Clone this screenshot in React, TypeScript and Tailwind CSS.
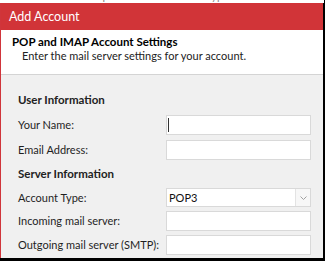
import React from "react";

const font = { fontFamily: 'Lato, "Noto Sans", Arial, sans-serif' };

function Field({ label, caret }: { label: string; caret?: boolean }) {
	return (
		<div className="flex items-center">
			<span className="w-[148px] whitespace-nowrap text-[11px] leading-[16px] text-[#1f1f1f]">{label}</span>
			<div className="relative h-[20px] w-[145px] border border-[#d9d9d9] bg-white">
				{caret && <div className="absolute left-[1px] top-[2px] h-[14px] w-px bg-[#333]" />}
			</div>
		</div>
	);
}

export default function App() {
	return (
		<div className="h-[261px] w-[325px] overflow-hidden bg-white" style={font}>
			<div className="h-[3px] overflow-hidden border-r border-black">
				<p className="-mt-[10px] whitespace-nowrap pl-[4px] text-[11px] leading-[12px] text-[#888]">
					Choose Manual setup or additional server types in the account window
				</p>
			</div>

			<div className="flex h-[255px] flex-col border-l border-l-[#d0353b] border-r-2 border-r-black">
				<div className="flex h-[27px] items-center bg-[#d13438] pl-[8px] text-[12.5px] leading-[18px] text-white">
					Add Account
				</div>

				<div className="h-[45px] border-b border-[#d4d4d4] bg-white pl-[11px] pt-[5px]">
					<p className="whitespace-nowrap text-[11.5px] font-bold leading-[14px] text-black">
						POP and IMAP Account Settings
					</p>
					<p className="whitespace-nowrap pl-[10px] text-[11px] leading-[14px] text-[#222]">
						Enter the mail server settings for your account.
					</p>
				</div>

				<div className="flex-1 bg-[#f0f0f0] pl-[17px] pt-[17px]">
					<p className="text-[11.5px] font-bold leading-[16px] text-[#222]">User Information</p>
					<div className="mt-[7px] flex flex-col gap-[5px]">
						<Field label="Your Name:" caret />
						<Field label="Email Address:" />
					</div>

					<p className="mt-[6px] text-[11.5px] font-bold leading-[16px] text-[#222]">Server Information</p>
					<div className="mt-[6px] flex flex-col gap-[4px]">
						<div className="flex items-center">
							<span className="w-[148px] whitespace-nowrap text-[11px] leading-[16px] text-[#1f1f1f]">Account Type:</span>
							<div className="flex h-[19px] w-[145px] items-center border border-[#d9d9d9] bg-white">
								<span className="flex-1 pl-[2px] text-[11px] leading-[16px] text-[#111]">POP3</span>
								<div className="flex h-full w-[15px] items-center justify-center border-l border-[#e3e3e3] bg-[#f7f7f7]">
									<svg width="7" height="4" viewBox="0 0 7 4" fill="none">
										<path d="M0.5 0.5 L3.5 3.5 L6.5 0.5" stroke="#a0a0a0" strokeWidth="1" />
									</svg>
								</div>
							</div>
						</div>
						<Field label="Incoming mail server:" />
						<Field label="Outgoing mail server (SMTP):" />
					</div>
				</div>
			</div>
			<div className="h-[3px] bg-black" />
		</div>
	);
}
